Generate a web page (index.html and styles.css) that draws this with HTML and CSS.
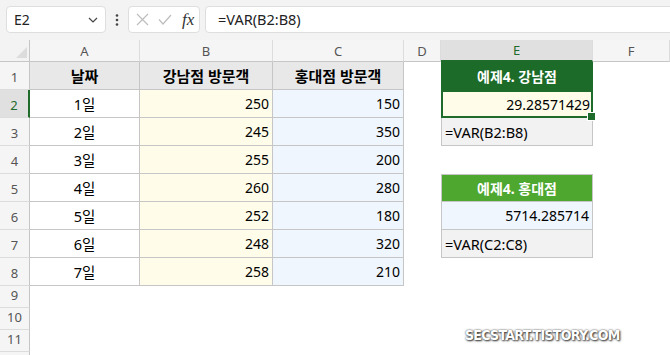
FILE: index.html
```html
<!DOCTYPE html>
<html lang="ko">
<head>
    <meta charset="UTF-8">
    <meta name="viewport" content="width=device-width, initial-scale=1.0">
    <title>VAR 함수 예제</title>
    <link rel="stylesheet" href="styles.css">
</head>
<body>
    <div class="toolbar">
        <div class="namebox">
            <span>E2</span>
            <svg width="10" height="6" viewBox="0 0 10 6"><path d="M1 1 L5 5 L9 1" fill="none" stroke="#444" stroke-width="1.2"/></svg>
        </div>
        <div class="more">
            <svg width="4" height="12" viewBox="0 0 4 12"><circle cx="2" cy="1.5" r="1.3" fill="#444"/><circle cx="2" cy="6" r="1.3" fill="#444"/><circle cx="2" cy="10.5" r="1.3" fill="#444"/></svg>
        </div>
        <div class="fxbox">
            <svg width="13" height="13" viewBox="0 0 13 13"><path d="M1 1 L12 12 M12 1 L1 12" stroke="#bdbdbd" stroke-width="1.2"/></svg>
            <svg width="14" height="11" viewBox="0 0 14 11"><path d="M1 5.5 L5 10 L13 1" fill="none" stroke="#bdbdbd" stroke-width="1.2"/></svg>
            <span class="fx">fx</span>
        </div>
        <div class="formula">=VAR(B2:B8)</div>
    </div>

    <div class="sheet">
        <!-- column headers -->
        <div class="corner"><svg width="30" height="22" viewBox="0 0 30 22"><polygon points="27,7 27,18 16,18" fill="#dcdcdc"/></svg></div>
        <div class="colhead">A</div>
        <div class="colhead">B</div>
        <div class="colhead">C</div>
        <div class="colhead">D</div>
        <div class="colhead active">E</div>
        <div class="colhead">F</div>

        <!-- row 1 -->
        <div class="rowhead">1</div>
        <div class="cell th">날짜</div>
        <div class="cell th">강남점 방문객</div>
        <div class="cell th">홍대점 방문객</div>
        <div class="blank"></div>
        <div class="box title dark">예제4. 강남점</div>
        <div class="blank"></div>

        <!-- row 2 -->
        <div class="rowhead active">2</div>
        <div class="cell day">1일</div>
        <div class="cell num yellow">250</div>
        <div class="cell num blue">150</div>
        <div class="blank"></div>
        <div class="box num yellow selected">29.28571429</div>
        <div class="blank"></div>

        <!-- row 3 -->
        <div class="rowhead">3</div>
        <div class="cell day">2일</div>
        <div class="cell num yellow">245</div>
        <div class="cell num blue">350</div>
        <div class="blank"></div>
        <div class="box formula-cell">=VAR(B2:B8)</div>
        <div class="blank"></div>

        <!-- row 4 -->
        <div class="rowhead">4</div>
        <div class="cell day">3일</div>
        <div class="cell num yellow">255</div>
        <div class="cell num blue">200</div>
        <div class="blank"></div>
        <div class="blank"></div>
        <div class="blank"></div>

        <!-- row 5 -->
        <div class="rowhead">5</div>
        <div class="cell day">4일</div>
        <div class="cell num yellow">260</div>
        <div class="cell num blue">280</div>
        <div class="blank"></div>
        <div class="box title light">예제4. 홍대점</div>
        <div class="blank"></div>

        <!-- row 6 -->
        <div class="rowhead">6</div>
        <div class="cell day">5일</div>
        <div class="cell num yellow">252</div>
        <div class="cell num blue">180</div>
        <div class="blank"></div>
        <div class="box num blue">5714.285714</div>
        <div class="blank"></div>

        <!-- row 7 -->
        <div class="rowhead">7</div>
        <div class="cell day">6일</div>
        <div class="cell num yellow">248</div>
        <div class="cell num blue">320</div>
        <div class="blank"></div>
        <div class="box formula-cell">=VAR(C2:C8)</div>
        <div class="blank"></div>

        <!-- row 8 -->
        <div class="rowhead">8</div>
        <div class="cell day">7일</div>
        <div class="cell num yellow">258</div>
        <div class="cell num blue">210</div>
        <div class="blank"></div>
        <div class="blank"></div>
        <div class="blank"></div>

        <!-- empty rows -->
        <div class="rowhead">9</div>
        <div class="blank wide"></div>
        <div class="rowhead">10</div>
        <div class="blank wide"></div>
        <div class="rowhead">11</div>
        <div class="blank wide"></div>
        <div class="rowhead"></div>
        <div class="blank wide"></div>
    </div>

    <div class="watermark">SECSTART.TISTORY.COM</div>
</body>
</html>
```

FILE: styles.css
```css
* {
    box-sizing: border-box;
}
body {
    margin: 0;
    width: 670px;
    height: 355px;
    overflow: hidden;
    position: relative;
    background: #ffffff;
    font-family: "Noto Sans", "Noto Sans CJK KR", sans-serif;
    font-size: 14px;
    color: #000;
}

/* formula bar */
.toolbar {
    display: flex;
    align-items: center;
    height: 40px;
    padding: 6px 0 7px 6px;
    background: #f3f3f3;
}
.namebox {
    display: flex;
    align-items: center;
    justify-content: space-between;
    width: 100px;
    height: 27px;
    padding: 0 7px 0 7px;
    background: #fff;
    border: 1px solid #dedede;
    border-radius: 4px;
    font-size: 14px;
    color: #222;
}
.more {
    width: 22px;
    display: flex;
    justify-content: center;
}
.fxbox {
    display: flex;
    align-items: center;
    gap: 9px;
    width: 72px;
    height: 27px;
    padding: 0 0 0 7px;
    background: #fff;
    border: 1px solid #dedede;
    border-radius: 4px;
}
.fx {
    font-family: "Liberation Serif", serif;
    font-style: italic;
    font-size: 17px;
    color: #333;
    margin-left: 1px;
}
.formula {
    flex: 1;
    height: 27px;
    margin-left: 5px;
    margin-right: -6px;
    padding-left: 12px;
    line-height: 25px;
    background: #fff;
    border: 1px solid #dedede;
    border-radius: 4px;
    font-size: 14.5px;
    color: #222;
}

/* grid */
.sheet {
    display: grid;
    grid-template-columns: 30px 110px 133px 131px 37px 152px 77px;
    grid-template-rows: 22px repeat(8, 28px) repeat(4, 22px);
}
.corner {
    background: #f3f3f3;
    border-right: 1px solid #c6c6c6;
    border-bottom: 1px solid #c6c6c6;
}
.corner svg {
    display: block;
}
.colhead {
    display: flex;
    align-items: center;
    justify-content: center;
    background: #f5f5f5;
    border-right: 1px solid #dcdcdc;
    border-bottom: 1px solid #c6c6c6;
    font-size: 13px;
    color: #555;
}
.colhead.active {
    background: #e0e0e0;
    border-bottom: 2px solid #1e6b2c;
    color: #1e6b2c;
}
.rowhead {
    display: flex;
    align-items: flex-end;
    justify-content: center;
    padding-bottom: 3px;
    background: #f5f5f5;
    border-right: 1px solid #c6c6c6;
    border-bottom: 1px solid #dcdcdc;
    font-size: 13px;
    color: #555;
}
.rowhead.active {
    background: #e0e0e0;
    border-right: 2px solid #1e6b2c;
    color: #1e6b2c;
}
.blank.wide {
    grid-column: span 6;
}

.cell, .box {
    display: flex;
    align-items: center;
    padding: 0 3px;
}
.cell {
    border-right: 1px solid #c6c6c6;
    border-bottom: 1px solid #c6c6c6;
}
.th {
    justify-content: center;
    background: #e8e8e8;
    font-weight: 700;
    font-size: 15px;
}
.day {
    justify-content: center;
    font-size: 14.5px;
}
.num {
    justify-content: flex-end;
}
.yellow {
    background: #fffde9;
}
.blue {
    background: #eff6fd;
}

/* result boxes in column E */
.box {
    border: 1px solid #c6c6c6;
    border-top: none;
}
.title {
    justify-content: center;
    color: #fff;
    font-weight: 700;
    border-top: 1px solid #c6c6c6;
}
.title.dark {
    background: #1c6b28;
    border-color: #1c6b28;
}
.title.light {
    background: #4ea72e;
}
.formula-cell {
    background: #f2f2f2;
    font-size: 14.5px;
}
.selected {
    position: relative;
    border: 2px solid #1e6b2c;
    padding-right: 1px;
}
.selected::after {
    content: "";
    position: absolute;
    right: -5px;
    bottom: -5px;
    width: 7px;
    height: 7px;
    background: #1e6b2c;
    border: 1px solid #fff;
}

.watermark {
    position: absolute;
    left: 465px;
    top: 327px;
    font-family: "DejaVu Sans", sans-serif;
    font-stretch: condensed;
    font-weight: 700;
    font-size: 14px;
    letter-spacing: -0.7px;
    color: #fff;
    text-shadow: 1px 1px 2px #333, 0 0 2px #444;
}
```
